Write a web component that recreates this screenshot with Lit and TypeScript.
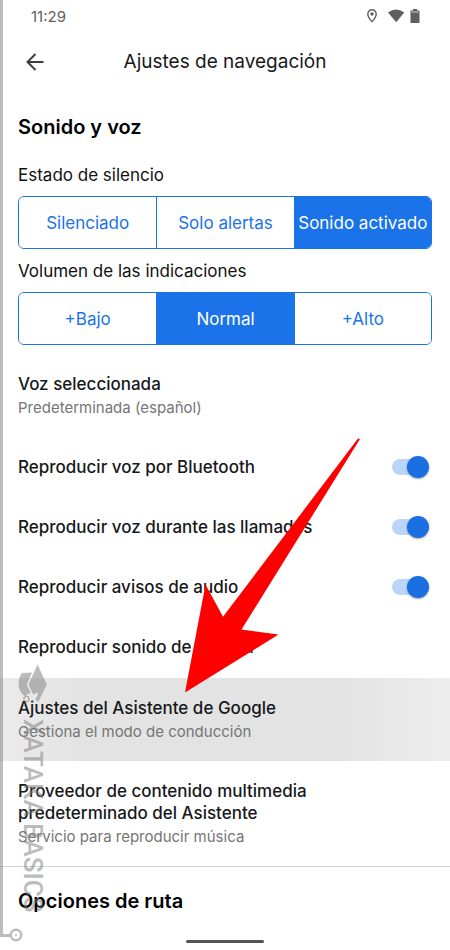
import { LitElement, html, css } from "lit";
import { customElement, property, state } from "lit/decorators.js";

@customElement("segmented-choice")
class SegmentedChoice extends LitElement {
  @property() label = "";
  @property({ type: Array }) options: string[] = [];
  @property({ type: Number }) selected = 0;

  static styles = css`
    :host { display: block; }
    .label { font-size: 17px; line-height: 24px; color: #111; margin-bottom: 9px; }
    .group {
      display: grid;
      grid-template-columns: repeat(3, 1fr);
      height: 53px;
      box-sizing: border-box;
      border: 1px solid #1a73e8;
      border-radius: 6px;
      overflow: hidden;
    }
    .option {
      font: inherit;
      font-size: 17px;
      line-height: 24px;
      color: #1a73e8;
      background: #fff;
      border: 0;
      padding: 0;
      white-space: nowrap;
      cursor: pointer;
    }
    .option + .option { border-left: 1px solid #1a73e8; }
    .option.on { background: #1a73e8; color: #fff; }
  `;

  render() {
    return html`
      <div class="label" id="label">${this.label}</div>
      <div class="group" role="group" aria-labelledby="label">
        ${this.options.map(
          (text, i) => html`<button
            class="option ${i === this.selected ? "on" : ""}"
            aria-pressed=${i === this.selected}
            @click=${() => (this.selected = i)}
          >${text}</button>`
        )}
      </div>
    `;
  }
}

@customElement("app-root")
class AppRoot extends LitElement {
  @state() private switches = [
    { text: "Reproducir voz por Bluetooth", on: true },
    { text: "Reproducir voz durante las llamadas", on: true },
    { text: "Reproducir avisos de audio", on: true },
  ];

  static styles = css`
    :host {
      display: block;
      position: relative;
      min-height: 100vh;
      overflow: hidden;
      background: #fff;
      color: #17181a;
      font-family: Inter, Roboto, sans-serif;
    }
    .screen { display: flex; flex-direction: column; min-height: 100vh; }
    .status {
      display: flex;
      align-items: center;
      justify-content: space-between;
      height: 32px;
      padding: 0 29px 0 31px;
      font-size: 15px;
      color: #5f5f5f;
    }
    .status-icons { display: block; }
    .bar {
      display: grid;
      grid-template-columns: 34px 1fr 34px;
      align-items: center;
      height: 60px;
      padding: 0 18px;
    }
    .back { display: flex; justify-content: center; border: 0; padding: 0; background: none; cursor: pointer; }
    .title { margin: 0; text-align: center; font-size: 19px; line-height: 24px; font-weight: 400; }
    .section { margin: 0; padding: 0 18px; font-size: 20px; line-height: 28px; font-weight: 600; color: #000; }
    .sound { padding-top: 21px; }
    .choices { display: flex; flex-direction: column; gap: 10px; padding: 22px 18px 9px; }
    .row {
      display: flex;
      flex-direction: column;
      gap: 3px;
      width: 100%;
      box-sizing: border-box;
      border: 0;
      padding: 19px 18px;
      background: none;
      color: inherit;
      font: inherit;
      text-align: left;
      cursor: pointer;
    }
    .pressed {
      background: linear-gradient(to right, #ebebeb, #e3e3e3 18%, #e3e3e3 76%, #ededed);
    }
    .name { font-size: 17px; line-height: 22px; font-weight: 500; max-width: 320px; }
    .note { font-size: 15px; line-height: 20px; color: #757575; }
    .lines { padding-bottom: 1px; }
    .line {
      flex-direction: row;
      align-items: center;
      justify-content: space-between;
      height: 60px;
      padding: 0 21px 0 18px;
    }
    .switch {
      appearance: none;
      display: grid;
      align-items: center;
      width: 37px;
      height: 22px;
      margin: 0;
      cursor: pointer;
    }
    .switch::before, .switch::after { content: ""; grid-area: 1 / 1; }
    .switch::before { width: 32px; height: 16px; border-radius: 8px; background: #d5d5d5; }
    .switch::after {
      width: 22px;
      height: 22px;
      border-radius: 50%;
      background: #fff;
      box-shadow: 0 1px 2px rgba(0, 0, 0, 0.35);
    }
    .switch:checked::before { background: #bad5f8; }
    .switch:checked::after { justify-self: end; background: #1a6fe3; }
    .divider { width: 100%; height: 1px; margin: 0; border: 0; background: #d4d4d4; }
    .route { padding-top: 20px; }
    .home { width: 78px; height: 3px; margin: auto auto 7px; border-radius: 2px; background: #555; }
    .arrow { position: absolute; left: 184px; top: 437px; pointer-events: none; }
    .mark { position: absolute; left: 0; top: 0; bottom: 0; width: 48px; pointer-events: none; opacity: 0.5; }
    .rail { position: absolute; left: 0; top: 0; bottom: 13px; width: 3px; background: #7c7c7c; }
    .node { position: absolute; left: 3px; bottom: 8px; }
    .brand {
      position: absolute;
      left: 17px;
      bottom: 37px;
      display: flex;
      flex-direction: column;
      align-items: center;
      gap: 14px;
    }
    .brand-name {
      writing-mode: vertical-rl;
      font-family: Roboto, sans-serif;
      font-size: 26px;
      line-height: 32px;
      font-weight: 500;
      color: #7c7c7c;
      white-space: nowrap;
    }
  `;

  private toggle(index: number) {
    this.switches = this.switches.map((s, i) => (i === index ? { ...s, on: !s.on } : s));
  }

  render() {
    return html`
      <div class="screen">
        <div class="status">
          <span>11:29</span>
          <svg class="status-icons" width="54" height="16" viewBox="0 0 54 16" aria-hidden="true">
            <path d="M5 1.700a4.200 4.200 0 0 0-4.200 4.200C.8 9 5 13.600 5 13.600S9.200 9 9.200 5.900A4.200 4.200 0 0 0 5 1.700z" fill="none" stroke="#5f5f5f" stroke-width="1.400" />
            <circle cx="5" cy="6" r="1.700" fill="#5f5f5f" />
            <path d="M21 4.500Q29 -1.700 37.200 4.500L29.200 14.200z" fill="#5f5f5f" />
            <path d="M46 1h4v1.500h2.500V15h-9V2.500H46z" fill="#5f5f5f" />
            <path d="M44.500 4h7" stroke="#bbb" stroke-width="1.200" />
          </svg>
        </div>
        <header class="bar">
          <button class="back" aria-label="Atrás">
            <svg width="20" height="20" viewBox="0 0 20 20" fill="none" stroke="#3c3c3f" stroke-width="2">
              <path d="M18.500 10H2.500M10.500 2L2.500 10l8 8" />
            </svg>
          </button>
          <h1 class="title">Ajustes de navegación</h1>
        </header>
        <h2 class="section sound">Sonido y voz</h2>
        <div class="choices">
          <segmented-choice label="Estado de silencio" .options=${["Silenciado", "Solo alertas", "Sonido activado"]} .selected=${2}></segmented-choice>
          <segmented-choice label="Volumen de las indicaciones" .options=${["+Bajo", "Normal", "+Alto"]} .selected=${1}></segmented-choice>
        </div>
        <button class="row">
          <span class="name">Voz seleccionada</span>
          <span class="note">Predeterminada (español)</span>
        </button>
        <div class="lines">
          ${this.switches.map(
            (s, i) => html`<label class="row line">
              <span class="name">${s.text}</span>
              <input class="switch" type="checkbox" .checked=${s.on} @change=${() => this.toggle(i)} />
            </label>`
          )}
          <button class="row line"><span class="name">Reproducir sonido de prueba</span></button>
        </div>
        <button class="row pressed">
          <span class="name">Ajustes del Asistente de Google</span>
          <span class="note">Gestiona el modo de conducción</span>
        </button>
        <button class="row">
          <span class="name">Proveedor de contenido multimedia predeterminado del Asistente</span>
          <span class="note">Servicio para reproducir música</span>
        </button>
        <hr class="divider" />
        <h2 class="section route">Opciones de ruta</h2>
        <div class="home"></div>
      </div>
      <svg class="arrow" width="178" height="257" viewBox="184 437 178 257" aria-hidden="true">
        <path d="M185 692.500L205.500 584.500 223 616.700 358 438.500 360 439 241.500 629.500 278.500 634.500z" fill="#f00" />
      </svg>
      <div class="mark" aria-hidden="true">
        <div class="rail"></div>
        <svg class="node" width="20" height="14" viewBox="0 0 20 14" fill="none" stroke="#7c7c7c">
          <path d="M0 7.500h7" stroke-width="3" />
          <circle cx="13" cy="7" r="5.300" stroke-width="2.400" />
          <circle cx="13" cy="7" r="1" fill="#7c7c7c" stroke="none" />
        </svg>
        <div class="brand">
          <svg width="32" height="42" viewBox="17 666 32 42" fill="#7c7c7c">
            <path d="M37.500 667.500L46.800 687.500 39 703.500 37.500 705 35.500 702 38 697 36.500 695.500 33.500 698 28.500 687.500z" />
            <path d="M32 675.500L26.700 687.500l4 8.500Q27 696 25.500 699.500C17 695 17 682 22 676z" />
            <circle cx="26.500" cy="702" r="2.600" fill="none" stroke="#7c7c7c" stroke-width="1.500" />
          </svg>
          <span class="brand-name">XATAKA BASICS</span>
        </div>
      </div>
    `;
  }
}
